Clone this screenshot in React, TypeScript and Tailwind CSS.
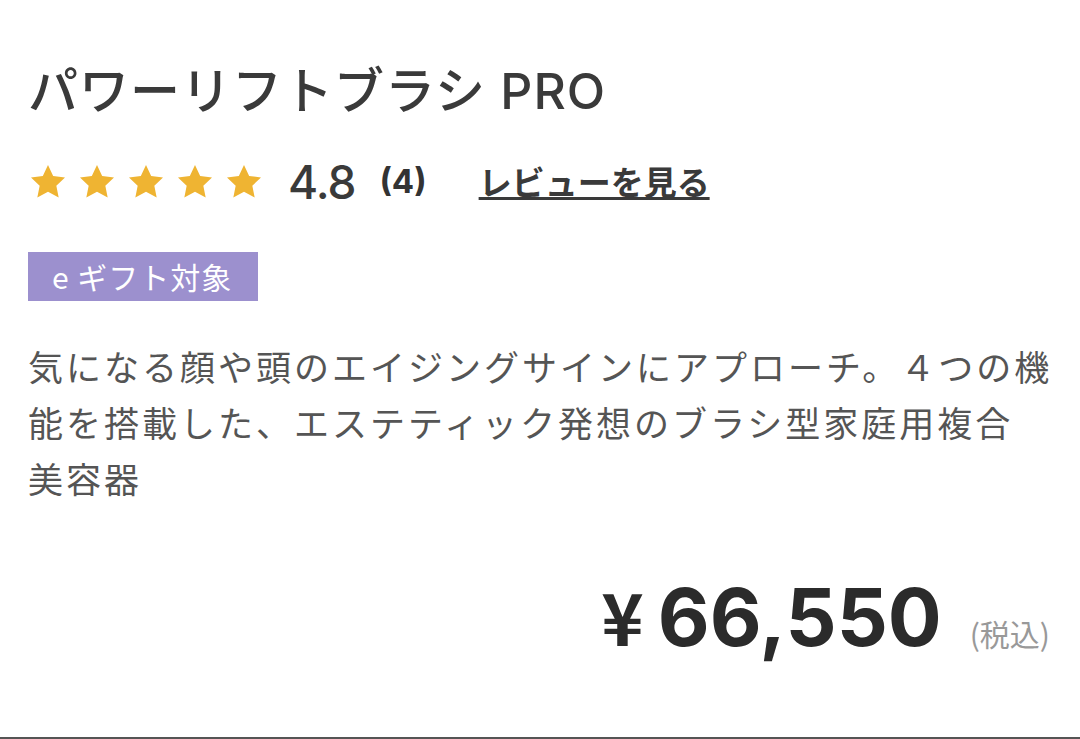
const sans = { fontFamily: 'Inter, "Noto Sans CJK JP", sans-serif' }
const jp = { fontFamily: '"Noto Sans CJK JP", sans-serif' }

function Stars() {
  return (
    <div className="flex items-center gap-[9px]">
      {[1, 2, 3, 4, 5].map(i => (
        <svg key={i} width="40" height="40" viewBox="0 0 24 24">
          <path
            d="M12 1.8l3.1 6.6 7.1.9-5.2 4.9 1.4 7.1L12 17.8l-6.4 3.5 1.4-7.1-5.2-4.9 7.1-.9z"
            fill="#EFB432"
          />
        </svg>
      ))}
    </div>
  )
}

export default function App() {
  return (
    <div className="w-[1080px] h-[739px] bg-white border-b-2 border-[#555] pl-[28px] pt-[56px] flex flex-col"
      style={sans}>
      <h1 className="text-[50px] leading-[70px] font-medium text-[#3a3a3a] tracking-[1px]">
        パワーリフトブラシ PRO
      </h1>

      <div className="flex items-center mt-[36px] h-[40px]">
        <Stars />
        <span className="ml-[24px] text-[46px] font-medium text-[#3a3a3a] tracking-[-1px]">4.8</span>
        <span className="ml-[24px] text-[33px] font-bold text-[#333]">(4)</span>
        <a className="ml-[52px] text-[33px] font-bold text-[#3a3a3a] underline underline-offset-[2px] decoration-[3px]"
          style={jp}>
          レビューを見る
        </a>
      </div>

      <div className="mt-[50px]">
        <span className="inline-flex items-center h-[49px] w-[230px] pl-[24px] bg-[#9C90CE] text-white text-[30px] tracking-[1px]"
          style={jp}>
          e ギフト対象
        </span>
      </div>

      <p className="mt-[37px] text-[35px] leading-[56px] text-[#555] tracking-[3px]" style={jp}>
        気になる顔や頭のエイジングサインにアプローチ。４つの機<br />
        能を搭載した、エステティック発想のブラシ型家庭用複合<br />
        美容器
      </p>

      <div className="mt-auto mb-[80px] flex items-baseline justify-end pr-[30px]">
        <span className="text-[72px] font-bold text-[#2b2b2b] leading-none mr-[14px]" style={jp}>¥</span>
        <span className="text-[80px] font-bold text-[#2b2b2b] leading-none">66,550</span>
        <span className="ml-[28px] text-[30px] text-[#999]" style={jp}>(税込)</span>
      </div>
    </div>
  )
}
